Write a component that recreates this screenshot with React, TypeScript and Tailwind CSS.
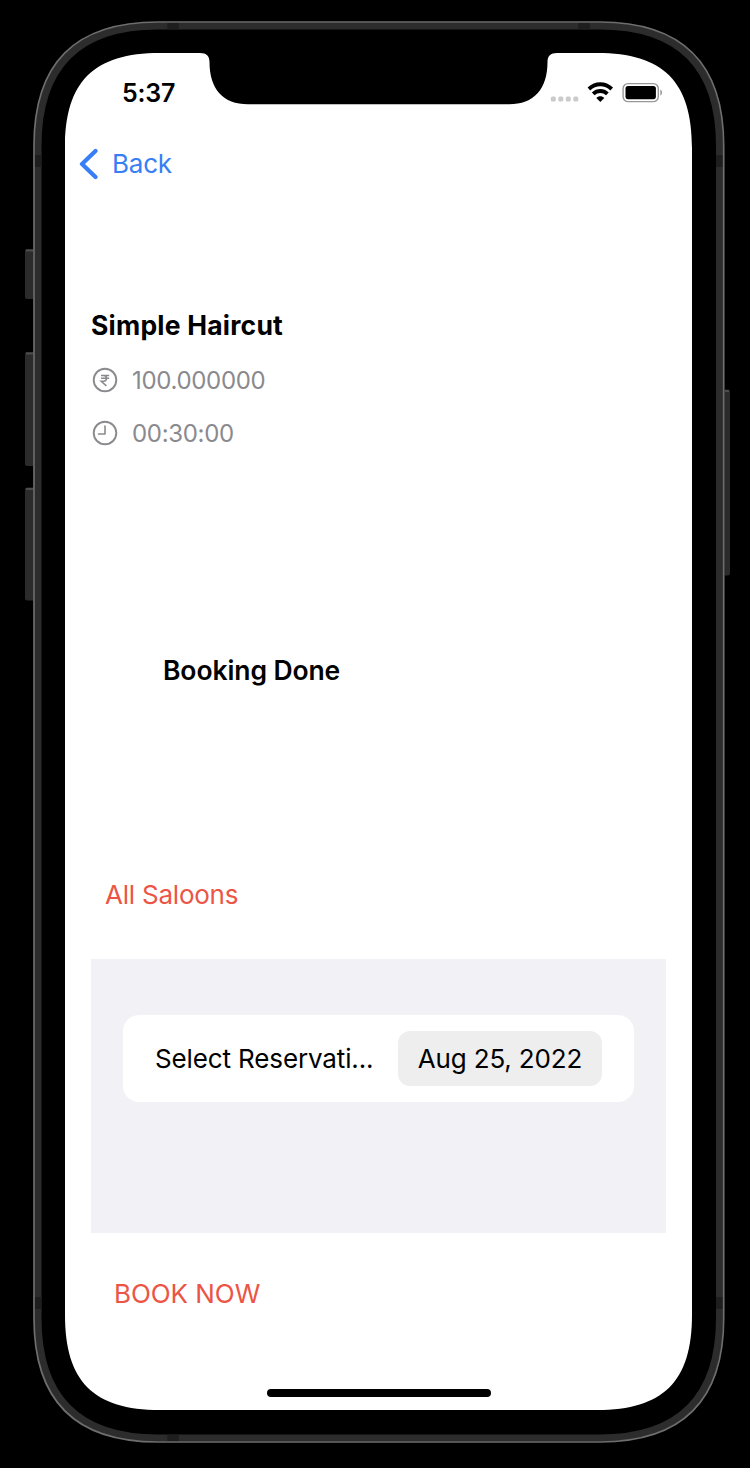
import React from "react";

function DeviceFrame() {
  return (
    <svg
      className="pointer-events-none absolute inset-0"
      width="750"
      height="1468"
      viewBox="0 0 750 1468"
      aria-hidden="true"
    >
      {/* Side buttons */}
      <g fill="#2b2b2b">
        <rect x="25" y="249" width="10" height="50" rx="2" />
        <rect x="25" y="352" width="10" height="114" rx="2" />
        <rect x="25" y="487.500" width="10" height="113" rx="2" />
        <rect x="722" y="389.500" width="8" height="186" rx="2" />
      </g>
      <g fill="#4c4c4c">
        <rect x="26" y="249.500" width="7" height="2" />
        <rect x="26" y="352.500" width="7" height="2" />
        <rect x="26" y="488" width="7" height="2" />
        <rect x="725" y="390" width="4" height="2" />
      </g>
      {/* Bezel with the screen and notch cut out */}
      <path
        fill="#000"
        fillRule="evenodd"
        d="M33 146C33 62 74 21 158 21H599.500C683.500 21 724.500 62 724.500 146V1318C724.500 1402 683.500 1443 599.500 1443H158C74 1443 33 1402 33 1318Z
           M65 148V1315C65 1381.500 93.500 1410 160 1410H597C663.500 1410 692 1381.500 692 1315V148C692 81.500 663.500 53 597 53H557C550.500 53 547.500 56 547.500 62C547.500 89 534 104.300 509 104.300H248C223 104.300 209.500 89 209.500 62C209.500 56 206.500 53 200 53H160C93.500 53 65 81.500 65 148Z"
      />
      {/* Steel band */}
      <path
        fill="none"
        stroke="#2c2c2c"
        strokeWidth="7"
        d="M38 146C38 66 78 26 158 26H599.500C679.500 26 719.500 66 719.500 146V1318C719.500 1398 679.500 1438 599.500 1438H158C78 1438 38 1398 38 1318Z"
      />
      <g fill="#1e1e1e">
        <rect x="167.300" y="22.500" width="11.500" height="7" />
        <rect x="578.300" y="22.500" width="11.500" height="7" />
        <rect x="167.300" y="1434.500" width="11.500" height="7" />
        <rect x="34.500" y="155" width="7" height="12" />
        <rect x="716" y="155" width="7" height="12" />
        <rect x="34.500" y="1297" width="7" height="12" />
        <rect x="716" y="1297" width="7" height="12" />
      </g>
      <path
        fill="none"
        stroke="#6e6e6e"
        strokeWidth="1.700"
        d="M34 146C34 63 75 22 158 22H599.500C682.500 22 723.700 63 723.700 146V1318C723.700 1401 682.500 1442 599.500 1442H158C75 1442 34 1401 34 1318Z"
      />
    </svg>
  );
}

function StatusBar() {
  return (
    <header className="flex h-20 items-center justify-between pl-[57px] pr-[30px]">
      <time className="text-[25px] leading-8 font-semibold tracking-[-0.200px]">5:37</time>
      <svg className="mb-0.5" width="112" height="22" viewBox="0 0 112 22" aria-hidden="true">
        <g fill="#cbcbcb">
          <rect x="0.800" y="15.500" width="5" height="5" rx="1.500" />
          <rect x="8.300" y="15.500" width="5" height="5" rx="1.500" />
          <rect x="15.800" y="15.500" width="5" height="5" rx="1.500" />
          <rect x="23.300" y="15.500" width="5" height="5" rx="1.500" />
        </g>
        <g fill="none" stroke="#000" strokeWidth="3.900">
          <path d="M38.900 8C45.700 1.700 54.900 1.700 61.700 8" />
          <path d="M43.200 12.900C47.300 9 53.300 9 57.400 12.900" />
        </g>
        <path d="M50.300 21L46.300 16.900C48.500 14.800 52.100 14.800 54.300 16.900Z" />
        <rect x="73.100" y="2.600" width="35.200" height="18" rx="5" fill="none" stroke="#999" strokeWidth="1.400" />
        <rect x="75.500" y="5" width="30.400" height="13.200" rx="2.600" />
        <path d="M110.300 8.600C112.600 9.400 112.600 13.800 110.300 14.600Z" fill="#999" />
      </svg>
    </header>
  );
}

function RupeeIcon() {
  return (
    <svg className="mb-0.5" width="26" height="26" viewBox="0 0 26 26" fill="none" stroke="#8a8a8e" aria-hidden="true">
      <circle cx="13" cy="13" r="11.300" strokeWidth="1.900" />
      <path d="M9 8.400H17.200M9 11.300H17.200M9 8.400H11.500C15.500 8.400 15.500 14.300 11.500 14.300H9.200L14.400 18.900" strokeWidth="1.500" />
    </svg>
  );
}

function ClockIcon() {
  return (
    <svg className="mb-0.5" width="26" height="26" viewBox="0 0 26 26" fill="none" stroke="#8a8a8e" aria-hidden="true">
      <circle cx="13" cy="13" r="11.300" strokeWidth="1.900" />
      <path d="M13 6V14H6.500" strokeWidth="1.600" strokeLinecap="round" strokeLinejoin="round" />
    </svg>
  );
}

export default function App() {
  return (
    <div className="relative h-[1468px] w-[750px] overflow-hidden bg-black pt-[53px] pl-[65px] font-['Inter',sans-serif] text-black">
      <main className="flex h-[1357px] w-[627px] flex-col bg-white">
        <StatusBar />
        <nav className="flex h-16 items-center pl-[13px]">
          <button className="flex items-center gap-3.5 text-[#387ef6]">
            <svg className="mb-0.5" width="20" height="32" viewBox="0 0 20 32" fill="none" aria-hidden="true">
              <path d="M17.500 3L4 16L17.500 29" stroke="currentColor" strokeWidth="4.200" strokeLinecap="round" strokeLinejoin="round" />
            </svg>
            <span className="mb-0.5 text-[26px] leading-8 tracking-[-0.200px]">Back</span>
          </button>
        </nav>

        <section className="mt-[108px] ml-[26px] flex flex-col">
          <h1 className="text-[26.500px] leading-10 font-bold tracking-[0.220px]">Simple Haircut</h1>
          <p className="mt-[9px] flex h-[53px] items-center gap-3.5 pl-px text-2xl tracking-[-0.320px] text-[#8a8a8e]">
            <RupeeIcon />
            <span>100.000000</span>
          </p>
          <p className="flex h-[53px] items-center gap-3.5 pl-px text-2xl tracking-[-0.320px] text-[#8a8a8e]">
            <ClockIcon />
            <span>00:30:00</span>
          </p>
        </section>

        <h2 className="mt-[190px] ml-[98px] text-[26.500px] leading-10 font-semibold tracking-[-0.100px]">
          Booking Done
        </h2>
        <button className="mt-[185px] ml-10 self-start text-[26px] leading-10 tracking-[-0.220px] text-[#eb5545]">
          All Saloons
        </button>

        <section className="mt-11 mx-[26px] h-[274px] shrink-0 bg-[#f2f1f6] px-8 pt-14">
          <div className="flex h-[87px] items-center justify-between rounded-[16px] bg-white px-8">
            <span className="text-[26px] leading-8 tracking-[-0.130px] whitespace-nowrap">Select Reservati...</span>
            <button className="flex h-[55px] w-[204px] items-center justify-center rounded-[12px] bg-[#eeeeef] text-[26px] tracking-[-0.150px] whitespace-nowrap">
              Aug 25, 2022
            </button>
          </div>
        </section>

        <button className="mt-[41px] ml-[49px] self-start text-[26px] leading-10 tracking-[-0.050px] text-[#eb5545]">
          BOOK NOW
        </button>
        <div className="mt-auto mb-[13px] h-2 w-[224px] self-center rounded-full bg-black" />
      </main>
      <DeviceFrame />
    </div>
  );
}
